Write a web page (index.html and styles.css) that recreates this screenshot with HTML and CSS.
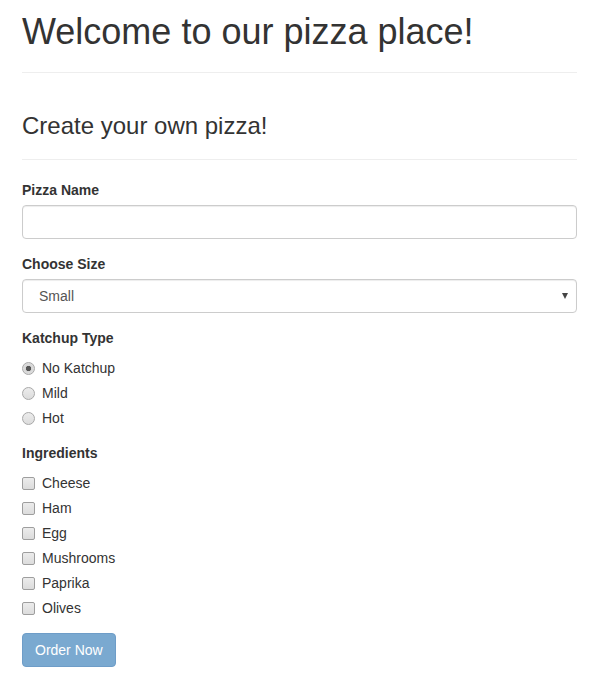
FILE: index.html
```html
<!DOCTYPE html>
<html>
<head>
<meta charset="utf-8">
<title>Pizza</title>
<link rel="stylesheet" href="styles.css">
</head>
<body>
<div class="page">
  <h1 class="title">Welcome to our pizza place!</h1>
  <hr class="rule">
  <h3 class="subtitle">Create your own pizza!</h3>
  <hr class="rule">
  <form class="form">
    <div class="form-group">
      <label class="control-label">Pizza Name</label>
      <input class="form-control" type="text">
    </div>
    <div class="form-group">
      <label class="control-label">Choose Size</label>
      <div class="select-wrap">
        <select class="form-control select">
          <option>Small</option>
          <option>Medium</option>
          <option>Large</option>
        </select>
      </div>
    </div>
    <div class="form-group">
      <label class="control-label">Katchup Type</label>
      <div class="choice"><label class="choice-label"><input class="radio-input" type="radio" name="k" checked>No Katchup</label></div>
      <div class="choice"><label class="choice-label"><input class="radio-input" type="radio" name="k">Mild</label></div>
      <div class="choice"><label class="choice-label"><input class="radio-input" type="radio" name="k">Hot</label></div>
    </div>
    <div class="form-group">
      <label class="control-label">Ingredients</label>
      <div class="choice"><label class="choice-label"><input class="check-input" type="checkbox">Cheese</label></div>
      <div class="choice"><label class="choice-label"><input class="check-input" type="checkbox">Ham</label></div>
      <div class="choice"><label class="choice-label"><input class="check-input" type="checkbox">Egg</label></div>
      <div class="choice"><label class="choice-label"><input class="check-input" type="checkbox">Mushrooms</label></div>
      <div class="choice"><label class="choice-label"><input class="check-input" type="checkbox">Paprika</label></div>
      <div class="choice"><label class="choice-label"><input class="check-input" type="checkbox">Olives</label></div>
    </div>
    <button class="btn" type="button" disabled>Order Now</button>
  </form>
</div>
</body>
</html>
```
FILE: styles.css
```css
* { box-sizing: border-box; }
html, body { margin: 0; padding: 0; background: #fff; }
body {
  font-family: "Liberation Sans", Arial, sans-serif;
  font-size: 14px;
  line-height: 20px;
  color: #333;
}
.page {
  width: 555px;
  margin-left: 22px;
  padding-top: 12px;
}
.title {
  font-size: 36px;
  font-weight: 500;
  line-height: 1.1;
  margin: 0 0 10px;
}
.rule {
  margin: 20px 0;
  border: 0;
  border-top: 1px solid #eee;
  height: 0;
}
.subtitle {
  font-size: 24px;
  font-weight: 500;
  line-height: 1.1;
  margin: 40px 0 10px;
}
.form { margin: 0; }
.form-group { margin-bottom: 15px; }
.control-label {
  display: inline-block;
  font-weight: bold;
  margin-bottom: 5px;
}
.form-control {
  display: block;
  width: 100%;
  height: 34px;
  padding: 6px 12px;
  font-family: inherit;
  font-size: 14px;
  line-height: 20px;
  color: #555;
  background: #fff;
  border: 1px solid #ccc;
  border-radius: 4px;
  box-shadow: inset 0 1px 1px rgba(0,0,0,.075);
  outline: none;
  margin: 0;
}
.select-wrap { position: relative; }
.select {
  -webkit-appearance: none;
  appearance: none;
  padding-left: 16px;
}
.select-wrap::after {
  content: "";
  position: absolute;
  right: 9px;
  top: 14px;
  width: 0;
  height: 0;
  border-left: 3.5px solid transparent;
  border-right: 3.5px solid transparent;
  border-top: 6px solid #444;
  pointer-events: none;
}
.choice {
  margin: 10px 0;
  min-height: 20px;
}
.control-label + .choice { margin-top: 5px; }
.choice + .choice { margin-top: -5px; }
.form-group .choice:last-child { margin-bottom: 0; }
.choice-label {
  display: block;
  padding-left: 20px;
  font-weight: normal;
  min-height: 20px;
  position: relative;
}
.radio-input, .check-input {
  -webkit-appearance: none;
  appearance: none;
  position: absolute;
  left: 0;
  top: 4px;
  width: 13px;
  height: 13px;
  margin: 0;
  background: linear-gradient(#ececec, #dcdcdc);
  border: 1px solid #a8a8a8;
}
.radio-input { border-radius: 50%; }
.check-input { border-radius: 2px; border-color: #9e9e9e; }
.radio-input:checked {
  background: radial-gradient(circle, #555 0, #555 2.3px, #d6d6d6 3px, #e4e4e4 100%);
}
.btn {
  display: inline-block;
  padding: 6px 12px;
  font-family: inherit;
  font-size: 14px;
  line-height: 20px;
  color: #fff;
  background: #7aa9d0;
  border: 1px solid #6e9dc8;
  border-radius: 4px;
  margin: 0;
}
```
